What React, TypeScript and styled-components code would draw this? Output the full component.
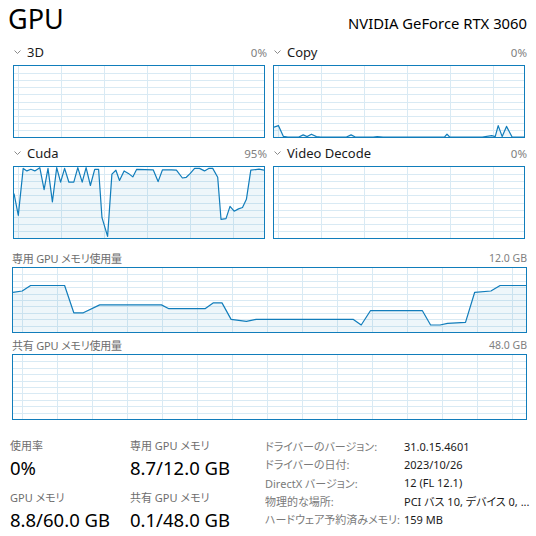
import React from 'react';
import styled, {createGlobalStyle} from 'styled-components';

const GlobalStyle = createGlobalStyle`
  body {
    margin: 0;
    background: #ffffff;
    font-family: "Segoe UI", "Noto Sans", "Noto Sans CJK JP", sans-serif;
    font-feature-settings: "palt";
  }
`;

const LINE = '#117dbb';
const GRID = '#d9eaf4';

type Point = [number, number];

const cudaData: Point[] = [
  [0, 62.7], [4.3, 31.8], [9.3, 98], [13, 94.5], [17, 96.8], [21, 94.5], [26, 99], [30.3, 68],
  [34.3, 98], [38.7, 51], [43, 99], [47, 78.6], [51, 98], [55.3, 78.6], [60.3, 78.6], [64.3, 99],
  [68.7, 78.6], [72.7, 99], [77, 74], [81.3, 96.8], [85.3, 96.8], [88.7, 28.6], [94.3, 2.3],
  [98.7, 90], [102.7, 95.5], [106.3, 81], [111, 94.5], [115.3, 91], [119.7, 86], [123.7, 96.8],
  [140.3, 96], [145.3, 79.5], [149.7, 96], [158.7, 96], [163.7, 95.5], [169.7, 84.5], [173.7, 85.5],
  [177.7, 91], [182, 98], [187, 98], [192, 94.5], [196.3, 98], [200.3, 98], [205.3, 85.5],
  [208.7, 26.4], [213.7, 27.3], [217.7, 44.5], [222, 37.7], [226.3, 41], [230.3, 43], [234.3, 54.5],
  [238.7, 95.5], [247, 97], [252, 95.5],
];

const copyData: Point[] = [
  [0, 14], [4.4, 16], [9.4, 1], [14, 0], [25, 0], [29.4, 3], [33.4, 0.5], [37.7, 4], [42.7, 0.5],
  [47, 0], [73, 0], [77.7, 3], [82, 0], [100, 0], [104, 0.5], [110, 0], [172, 0], [174.4, 4],
  [177, 0], [210, 0], [219.4, 2], [223, 0.5], [226, 16], [230, 0.5], [234.4, 15], [240, 0], [252, 0],
];

const dedicatedData: Point[] = [
  [0, 62], [9.2, 64], [17.7, 72.7], [51.8, 72.7], [61, 30], [70.6, 30], [87, 42.4], [149, 42.4],
  [156.5, 36.4], [192.7, 36.4], [200.9, 45.5], [209.8, 45.5], [219, 19.7], [234.3, 16.7],
  [243.9, 19.7], [341.7, 19.7], [349.6, 11], [358.8, 33.3], [411, 33.3], [419.2, 11], [428.7, 11],
  [436.2, 13.6], [454.3, 15], [463.5, 62], [479.8, 64], [489, 72.7], [515, 72.7],
];

const Page = styled.div`
  width: 536px;
  height: 536px;
  box-sizing: border-box;
  padding: 0 9px 0 8px;
  overflow: hidden;
  color: #000;
`;

const Header = styled.div`
  display: flex;
  justify-content: space-between;
  align-items: baseline;
  height: 42px;
`;

const Title = styled.div`
  font-size: 27px;
  line-height: 38px;
`;

const Model = styled.div`
  font-size: 14.8px;
`;

const SmallGrid = styled.div`
  display: grid;
  grid-template-columns: 254px 254px;
  column-gap: 6px;
  row-gap: 5px;
  padding-left: 5px;
  margin-bottom: 10px;
`;

const Cell = styled.div`
  display: flex;
  flex-direction: column;
`;

const LabelRow = styled.div<{ $h: number }>`
  display: flex;
  align-items: center;
  height: ${p => p.$h}px;
`;

const Name = styled.span`
  font-size: 13px;
  color: #1a1a1a;
  margin-left: 6px;
  flex: 1;
`;

const Caption = styled.span`
  font-size: 11px;
  letter-spacing: -0.2px;
  color: #6e6e6e;
  flex: 1;
`;

const Pct = styled.span<{ $size?: number }>`
  font-size: ${p => p.$size ?? 11.5}px;
  color: #808080;
`;

const Box = styled.div<{ $w: number; $h: number; $mt: number }>`
  width: ${p => p.$w}px;
  height: ${p => p.$h}px;
  box-sizing: border-box;
  border: 1px solid ${LINE};
  background: #ffffff;
  margin-top: ${p => p.$mt}px;
  svg { display: block; }
`;

const Large = styled.div`
  display: flex;
  flex-direction: column;
  width: 515px;
  margin-left: 3px;
  padding-left: 1px;
  & + & { margin-top: 3px; }
`;

const Stats = styled.div`
  display: flex;
  margin-top: 17px;
  margin-left: 2px;
`;

const StatGrid = styled.div`
  display: grid;
  grid-template-columns: 120px 135px;
`;

const Stat = styled.div`
  display: flex;
  flex-direction: column;
  height: 52px;
`;

const StatLabel = styled.div`
  font-size: 11px;
  line-height: 18px;
  color: #6e6e6e;
`;

const StatValue = styled.div`
  font-size: 18.5px;
  line-height: 26px;
  color: #000;
`;

const Details = styled.div`
  display: grid;
  grid-template-columns: 139px auto;
  grid-auto-rows: 18.3px;
  align-items: center;
  font-size: 11px;
`;

const DetailKey = styled.div`
  color: #7a7a7a;
  white-space: nowrap;
`;

const DetailVal = styled.div`
  color: #1a1a1a;
  white-space: nowrap;
`;

function Chevron() {
  return (
    <svg width="7" height="5" viewBox="0 0 7 5" style={{marginLeft: 1}}>
      <polyline points="0.5,0.5 3.5,3.5 6.5,0.5" fill="none" stroke="#8a8a8a" strokeWidth="1" />
    </svg>
  );
}

function Chart({w, h, mt, data, off, step}: {w: number; h: number; mt: number; data?: Point[]; off: number; step: number}) {
  const iw = w - 2;
  const ih = h - 2;
  const verticals: number[] = [];
  for (let x = off; x < iw; x += step) verticals.push(Math.round(x) + 0.5);
  const horizontals: number[] = [];
  for (let k = 1; k < 10; k++) horizontals.push(Math.round((ih * k) / 10) + 0.5);
  // data x is measured against the outer box width
  const sx = iw / w;
  const pts = data ? data.map(([x, v]) => `${(x * sx).toFixed(1)},${(ih * (1 - v / 100)).toFixed(1)}`) : [];
  return (
    <Box $w={w} $h={h} $mt={mt}>
      <svg width={iw} height={ih}>
        {verticals.map(x => <line key={'v' + x} x1={x} x2={x} y1={0} y2={ih} stroke={GRID} strokeWidth="1" />)}
        {horizontals.map(y => <line key={'h' + y} x1={0} x2={iw} y1={y} y2={y} stroke={GRID} strokeWidth="1" />)}
        {data && (
          <>
            <path d={`M0,${ih} L${pts.join(' L')} L${iw},${ih} Z`} fill="rgba(17,125,187,0.07)" />
            <polyline points={pts.join(' ')} fill="none" stroke={LINE} strokeWidth="1.2" strokeLinejoin="round" />
          </>
        )}
      </svg>
    </Box>
  );
}

function Engine({name, pct, data}: {name: string; pct: string; data?: Point[]}) {
  return (
    <Cell>
      <LabelRow $h={20}>
        <Chevron />
        <Name>{name}</Name>
        <Pct>{pct}</Pct>
      </LabelRow>
      <Chart w={252} h={73} mt={3} data={data} off={4} step={43} />
    </Cell>
  );
}

function Memory({caption, total, data}: {caption: string; total: string; data?: Point[]}) {
  return (
    <Large>
      <LabelRow $h={18}>
        <Caption>{caption}</Caption>
        <Pct $size={10.5}>{total}</Pct>
      </LabelRow>
      <Chart w={515} h={66} mt={0} data={data} off={9} step={35} />
    </Large>
  );
}

const details: [string, string][] = [
  ['ドライバーのバージョン:', '31.0.15.4601'],
  ['ドライバーの日付:', '2023/10/26'],
  ['DirectX バージョン:', '12 (FL 12.1)'],
  ['物理的な場所:', 'PCI バス 10, デバイス 0, ...'],
  ['ハードウェア予約済みメモリ:', '159 MB'],
];

export default function App() {
  return (
    <Page>
      <GlobalStyle />
      <Header>
        <Title>GPU</Title>
        <Model>NVIDIA GeForce RTX 3060</Model>
      </Header>
      <SmallGrid>
        <Engine name="3D" pct="0%" />
        <Engine name="Copy" pct="0%" data={copyData} />
        <Engine name="Cuda" pct="95%" data={cudaData} />
        <Engine name="Video Decode" pct="0%" />
      </SmallGrid>
      <Memory caption="専用 GPU メモリ使用量" total="12.0 GB" data={dedicatedData} />
      <Memory caption="共有 GPU メモリ使用量" total="48.0 GB" />
      <Stats>
        <StatGrid>
          <Stat>
            <StatLabel>使用率</StatLabel>
            <StatValue>0%</StatValue>
          </Stat>
          <Stat>
            <StatLabel>専用 GPU メモリ</StatLabel>
            <StatValue>8.7/12.0 GB</StatValue>
          </Stat>
          <Stat>
            <StatLabel>GPU メモリ</StatLabel>
            <StatValue>8.8/60.0 GB</StatValue>
          </Stat>
          <Stat>
            <StatLabel>共有 GPU メモリ</StatLabel>
            <StatValue>0.1/48.0 GB</StatValue>
          </Stat>
        </StatGrid>
        <Details>
          {details.map(([k, v]) => (
            <React.Fragment key={k}>
              <DetailKey>{k}</DetailKey>
              <DetailVal>{v}</DetailVal>
            </React.Fragment>
          ))}
        </Details>
      </Stats>
    </Page>
  );
}
